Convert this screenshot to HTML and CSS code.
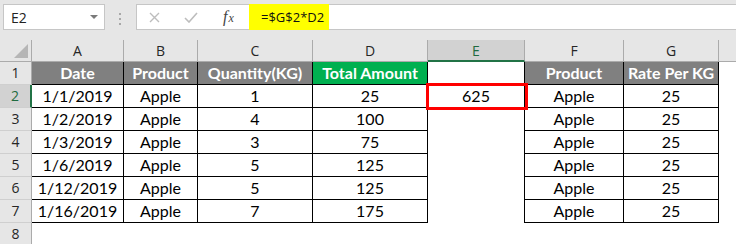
FILE: index.html
```html
<!DOCTYPE html>
<html lang="en">
<head>
    <meta charset="UTF-8">
    <title>Total Amount - Sheet1</title>
    <link rel="stylesheet" href="styles.css">
</head>
<body>
    <div class="toolbar">
        <div class="namebox">
            <span>E2</span>
            <svg class="drop" width="8" height="4" viewBox="0 0 8 4"><polygon points="0,0 8,0 4,4" fill="#7a7a7a"/></svg>
        </div>
        <svg class="grip" width="3" height="13" viewBox="0 0 3 13">
            <rect x="0" y="0" width="2" height="2" fill="#a8a8a8"/>
            <rect x="0" y="5" width="2" height="2" fill="#a8a8a8"/>
            <rect x="0" y="10" width="2" height="2" fill="#a8a8a8"/>
        </svg>
        <div class="formula">
            <div class="tools">
                <svg width="11" height="11" viewBox="0 0 11 11"><path d="M1 1 L10 10 M10 1 L1 10" stroke="#bdbdbd" stroke-width="1.4" fill="none"/></svg>
                <svg width="14" height="11" viewBox="0 0 14 11"><path d="M1 6 L5 10 L13 1" stroke="#bdbdbd" stroke-width="1.6" fill="none"/></svg>
                <span class="fx"><i>f</i><i class="x">x</i></span>
            </div>
            <div class="input"><span class="hl">=$G$2*D2</span></div>
        </div>
    </div>

    <div class="sheet">
        <!-- column headers -->
        <div class="corner"><svg width="14" height="14" viewBox="0 0 14 14"><polygon points="14,0 14,14 0,14" fill="#b6b6b6"/></svg></div>
        <div class="colhead">A</div>
        <div class="colhead">B</div>
        <div class="colhead">C</div>
        <div class="colhead">D</div>
        <div class="colhead sel">E</div>
        <div class="colhead">F</div>
        <div class="colhead">G</div>
        <div class="colhead end"></div>

        <!-- row 1 -->
        <div class="rowhead">1</div>
        <div class="cell th">Date</div>
        <div class="cell th">Product</div>
        <div class="cell th">Quantity(KG)</div>
        <div class="cell th green">Total Amount</div>
        <div class="cell edge"></div>
        <div class="cell th">Product</div>
        <div class="cell th">Rate Per KG</div>
        <div class="cell"></div>

        <!-- row 2 -->
        <div class="rowhead sel">2</div>
        <div class="cell box">1/1/2019</div>
        <div class="cell box">Apple</div>
        <div class="cell box">1</div>
        <div class="cell box">25</div>
        <div class="cell edge active">625<span class="selbox"></span></div>
        <div class="cell box">Apple</div>
        <div class="cell box">25</div>
        <div class="cell"></div>

        <!-- row 3 -->
        <div class="rowhead">3</div>
        <div class="cell box">1/2/2019</div>
        <div class="cell box">Apple</div>
        <div class="cell box">4</div>
        <div class="cell box">100</div>
        <div class="cell edge"></div>
        <div class="cell box">Apple</div>
        <div class="cell box">25</div>
        <div class="cell"></div>

        <!-- row 4 -->
        <div class="rowhead">4</div>
        <div class="cell box">1/3/2019</div>
        <div class="cell box">Apple</div>
        <div class="cell box">3</div>
        <div class="cell box">75</div>
        <div class="cell edge"></div>
        <div class="cell box">Apple</div>
        <div class="cell box">25</div>
        <div class="cell"></div>

        <!-- row 5 -->
        <div class="rowhead">5</div>
        <div class="cell box">1/6/2019</div>
        <div class="cell box">Apple</div>
        <div class="cell box">5</div>
        <div class="cell box">125</div>
        <div class="cell edge"></div>
        <div class="cell box">Apple</div>
        <div class="cell box">25</div>
        <div class="cell"></div>

        <!-- row 6 -->
        <div class="rowhead">6</div>
        <div class="cell box">1/12/2019</div>
        <div class="cell box">Apple</div>
        <div class="cell box">5</div>
        <div class="cell box">125</div>
        <div class="cell edge"></div>
        <div class="cell box">Apple</div>
        <div class="cell box">25</div>
        <div class="cell"></div>

        <!-- row 7 -->
        <div class="rowhead">7</div>
        <div class="cell box">1/16/2019</div>
        <div class="cell box">Apple</div>
        <div class="cell box">7</div>
        <div class="cell box">175</div>
        <div class="cell edge"></div>
        <div class="cell box">Apple</div>
        <div class="cell box">25</div>
        <div class="cell"></div>

        <!-- row 8 -->
        <div class="rowhead last">8</div>
        <div class="cell"></div>
        <div class="cell"></div>
        <div class="cell"></div>
        <div class="cell"></div>
        <div class="cell"></div>
        <div class="cell"></div>
        <div class="cell"></div>
        <div class="cell"></div>
    </div>
</body>
</html>
```

FILE: styles.css
```css
* { box-sizing: border-box; }
html, body {
    margin: 0;
    height: 100%;
    overflow: hidden;
}
body {
    background: #fff;
    font-family: "Open Sans", "Noto Sans", sans-serif;
    display: flex;
    flex-direction: column;
}

/* name box + formula bar */
.toolbar {
    height: 40px;
    background: #e6e6e6;
    display: flex;
    align-items: flex-start;
    padding: 4px 0 0 3px;
    flex: none;
}
.namebox {
    width: 102px;
    height: 26px;
    background: #fff;
    border: 1px solid #c6c6c6;
    display: flex;
    align-items: center;
    justify-content: space-between;
    padding: 0 6px 0 7px;
    font-size: 14px;
    color: #222;
}
.grip {
    margin: 9px 14px 0 14px;
}
.formula {
    flex: 1;
    height: 26px;
    display: flex;
    background: #fff;
    border: 1px solid #c6c6c6;
    border-right: none;
}
.tools {
    width: 112px;
    display: flex;
    align-items: center;
    padding-left: 12px;
    gap: 24px;
}
.fx {
    font-family: "Liberation Serif", "DejaVu Serif", serif;
    font-size: 16px;
    color: #444;
    margin-left: 1px;
}
.fx .x {
    font-size: 12px;
    margin-left: 1px;
}
.input {
    flex: 1;
    display: flex;
    margin-top: -1px;
    height: 26px;
}
.hl {
    background: #ffff00;
    width: 80px;
    display: flex;
    align-items: center;
    padding-left: 12px;
    font-size: 13px;
    color: #111;
}

/* worksheet grid */
.sheet {
    flex: 1;
    display: grid;
    grid-template-columns: 32px 92px 74px 115px 115px 97px 99px 95px 1fr;
    grid-template-rows: 22px repeat(7, 23px) 1fr;
}
.corner {
    background: #e6e6e6;
    border-right: 1px solid #ababab;
    border-bottom: 1px solid #ababab;
    display: flex;
    align-items: flex-end;
    justify-content: flex-end;
    padding: 0 3px 3px 0;
}
.colhead {
    background: #e6e6e6;
    border-right: 1px solid #ababab;
    border-bottom: 1px solid #ababab;
    text-align: center;
    font-size: 14px;
    line-height: 21px;
    color: #262626;
}
.colhead.end { border-right: none; }
.colhead.sel {
    background: #d2d2d2;
    color: #1f6b40;
    border-bottom: 2px solid #217346;
}
.rowhead {
    background: #e6e6e6;
    border-right: 1px solid #ababab;
    border-bottom: 1px solid #cfcfcf;
    text-align: center;
    font-size: 14px;
    line-height: 22px;
    color: #262626;
}
.rowhead.sel {
    background: #d2d2d2;
    color: #1f6b40;
    border-right: 2px solid #217346;
}
.rowhead.last { border-bottom: none; }

.cell {
    background: #fff;
    text-align: center;
    font-family: Lato, "Open Sans", sans-serif;
    font-size: 16px;
    line-height: 22px;
    color: #000;
}
.box {
    border-right: 1px solid #000;
    border-bottom: 1px solid #000;
}
.th {
    background: #808080;
    color: #fff;
    font-weight: bold;
    border-right: 1px solid #000;
    border-bottom: 1px solid #000;
}
.th.green { background: #00b050; }
.edge { border-right: 1px solid #000; }

.active { position: relative; }
.selbox {
    position: absolute;
    left: -2px;
    top: -2px;
    right: -4px;
    bottom: -2px;
    border: 3px solid #ff0000;
}
```
